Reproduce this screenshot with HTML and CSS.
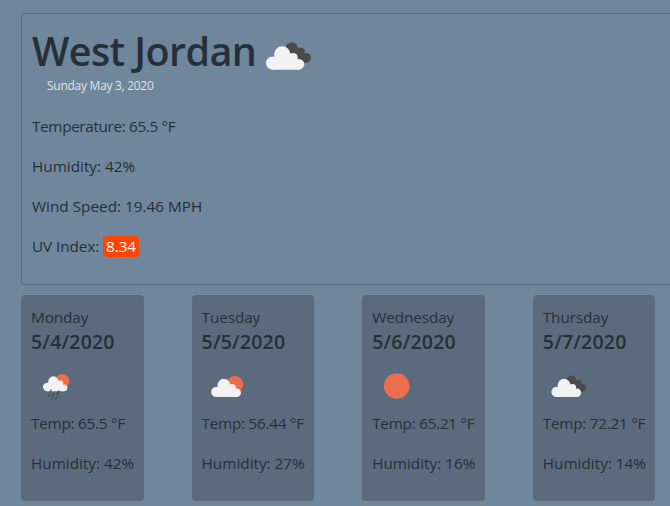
FILE: index.html
```
<!DOCTYPE html>
<html lang="en">
<head>
<meta charset="utf-8">
<title>Weather</title>
<link rel="stylesheet" href="styles.css">
</head>
<body>
<svg class="defs" aria-hidden="true">
  <defs>
    <g id="cloud">
      <circle cx="12.6" cy="27.1" r="6.6"/><circle cx="22.3" cy="18.5" r="8.2"/>
      <circle cx="33" cy="21.7" r="4.8"/><circle cx="38.9" cy="28.3" r="5.4"/>
      <path d="M12.6 33.7V22l10-4 10 3 6.3 4v8.7z"/>
    </g>
    <g id="back-cloud">
      <circle cx="31.8" cy="12.6" r="6.3"/><circle cx="40.7" cy="15.8" r="4.2"/>
      <circle cx="46" cy="21.8" r="4.9"/><path d="M28 14l9-3 6 5 3 10.7h-5z"/>
    </g>
  </defs>
</svg>
<main class="page">
  <section class="current">
    <header class="heading">
      <h1 class="city">West Jordan</h1>
      <svg class="city-icon" viewBox="0 0 56 40"><use href="#back-cloud" class="dark"/><use href="#cloud" class="white"/></svg>
    </header>
    <p class="date">Sunday May 3, 2020</p>
    <p class="fact temperature">Temperature: 65.5 °F</p>
    <p class="fact humidity">Humidity: 42%</p>
    <p class="fact wind">Wind Speed: 19.46 MPH</p>
    <p class="fact uv-row">UV Index: <span class="uv">8.34</span></p>
  </section>
  <section class="forecast">
    <article class="day">
      <p class="name">Monday</p>
      <h2 class="day-date">5/4/2020</h2>
      <svg class="icon" viewBox="0 0 40 40">
        <circle class="sun" cx="26.3" cy="15" r="7"/>
        <use href="#cloud" class="white" transform="translate(3.2 3.8) scale(.637)"/>
        <path class="rain" d="M15 24.2l-.5 1M22.7 24.8l-.4 1.6M13.2 28.8l-.7 1.6M17.8 27.5l-.9 2.2M21.5 27.7l-.3 1M16.6 31.8l-.4 .9M20.6 31l-.7 1.8"/>
      </svg>
      <p class="fact temp">Temp: 65.5 °F</p>
      <p class="fact humidity">Humidity: 42%</p>
    </article>
    <article class="day">
      <p class="name">Tuesday</p>
      <h2 class="day-date">5/5/2020</h2>
      <svg class="icon" viewBox="0 0 40 40">
        <circle class="sun" cx="28" cy="18.3" r="8.3"/>
        <use href="#cloud" class="white" transform="translate(-.5 4.8) scale(.778)"/>
      </svg>
      <p class="fact temp">Temp: 56.44 °F</p>
      <p class="fact humidity">Humidity: 27%</p>
    </article>
    <article class="day">
      <p class="name">Wednesday</p>
      <h2 class="day-date">5/6/2020</h2>
      <svg class="icon" viewBox="0 0 40 40"><circle class="sun" cx="19.7" cy="20" r="12.8"/></svg>
      <p class="fact temp">Temp: 65.21 °F</p>
      <p class="fact humidity">Humidity: 16%</p>
    </article>
    <article class="day">
      <p class="name">Thursday</p>
      <h2 class="day-date">5/7/2020</h2>
      <svg class="icon" viewBox="0 0 40 40">
        <g transform="translate(-1.3 4.8) scale(.778)"><use href="#back-cloud" class="dark"/><use href="#cloud" class="white"/></g>
      </svg>
      <p class="fact temp">Temp: 72.21 °F</p>
      <p class="fact humidity">Humidity: 14%</p>
    </article>
  </section>
</main>
</body>
</html>
```
FILE: styles.css
```
* { box-sizing: border-box; }
body {
  margin: 0;
  background: #70869d;
  color: #263038;
  font: 400 15.3px/24px "Open Sans", "Noto Sans", sans-serif;
}
h1, h2, p { margin: 0; }
.defs { display: block; width: 0; height: 0; }
.page { padding: 13px 0 0 21px; }
.current {
  height: 272px;
  padding: 10px;
  border: 1px solid #596b80;
  border-right: 0;
  border-radius: 4px 0 0 4px;
}
.heading { display: flex; align-items: center; height: 52px; }
.city { padding-top: 2px; font-size: 39.5px; font-weight: 600; line-height: 52px; letter-spacing: -.6px; white-space: nowrap; width: 228px; }
.city-icon { flex: none; width: 56px; height: 40px; margin-top: 12px; }
.date {
  height: 20px;
  margin: 0 0 18px 15px;
  color: #e0e1e3;
  font-size: 12px;
  letter-spacing: -.28px;
  line-height: 20px;
}
.fact { margin-bottom: 16px; white-space: nowrap; }
.temperature { letter-spacing: -.35px; }
.wind { letter-spacing: 0; }
.uv-row { letter-spacing: -.08px; }
.temp { letter-spacing: -.26px; }
.uv { display: inline-block; padding: 0 3px; border-radius: 4px; background: #ff4500; color: #fff; line-height: 21px; }
.forecast { display: flex; gap: 48px; margin-top: 10px; }
.day {
  flex: none;
  width: 122.6px;
  height: 206px;
  padding: 10px;
  border-radius: 4px;
  background: #5b6b7d;
}
.name { letter-spacing: -.1px; }
.day-date { padding-top: 1px; font-size: 19.5px; font-weight: 600; line-height: 24px; letter-spacing: .2px; white-space: nowrap; }
.icon { display: block; width: 40px; height: 40px; margin: 12px 0 5px 5px; }
.white { fill: #f2f2f2; }
.dark { fill: #4b4b4c; }
.sun { fill: #ec6e4c; }
.rain { fill: none; stroke: #454547; stroke-width: 1.3; stroke-linecap: round; }
```
